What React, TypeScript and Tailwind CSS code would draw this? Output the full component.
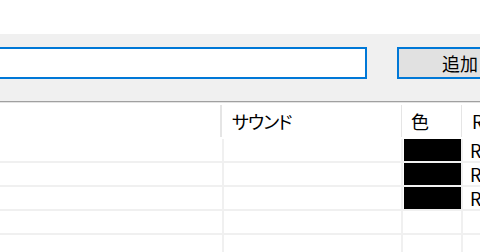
import React from 'react';

const FONT = "font-['Meiryo_UI','Noto_Sans_CJK_JP',sans-serif]";

const rows = [
    { color: '#000000', label: 'RGB(0, 0, 0)' },
    { color: '#000000', label: 'RGB(0, 0, 0)' },
    { color: '#000000', label: 'RGB(0, 0, 0)' },
    { color: '', label: '' },
    { color: '', label: '' },
];

const App: React.FC = () => {
    return (
        <div className={`w-[480px] h-[252px] overflow-hidden bg-white text-black text-[18px] ${FONT} [font-feature-settings:'palt']`}>
            {/* 上の余白 */}
            <div className="h-[34px] bg-white" />

            {/* 入力欄 + 追加ボタン */}
            <div className="h-[67px] bg-[#f0f0f0] flex items-start pt-[13px]">
                <input
                    type="text"
                    className="ml-[-12px] w-[379px] h-[32px] shrink-0 border-2 border-[#0078d7] bg-white outline-none"
                />
                <button className="ml-[30px] w-[120px] h-[32px] shrink-0 border-2 border-[#0078d7] bg-[#e1e1e1] flex items-center pl-[43px] leading-none">
                    追加
                </button>
            </div>
            <div className="h-px bg-[#a0a0a0]" />
            <div className="h-px bg-[#e3e3e3]" />

            {/* ヘッダー */}
            <div className="flex h-[36px] bg-white">
                <div className="w-[222px] shrink-0 flex items-stretch justify-end py-[2px]">
                    <div className="w-[2px] bg-[#e5e5e5]" />
                </div>
                <div className="w-[180px] shrink-0 flex items-center justify-between py-[2px]">
                    <span className="pl-[10px] tracking-[-1px]">サウンド</span>
                    <div className="w-px self-stretch bg-[#e5e5e5]" />
                </div>
                <div className="w-[60px] shrink-0 flex items-center justify-between py-[2px]">
                    <span className="pl-[9px]">色</span>
                    <div className="w-px self-stretch bg-[#e5e5e5]" />
                </div>
                <div className="flex-1 flex items-center pl-[10px] whitespace-nowrap">RGB</div>
            </div>

            {/* 行 */}
            {rows.map((r, i) => (
                <div key={i} className="flex h-[24px] border-b-2 border-[#f0f0f0]">
                    <div className="w-[224px] shrink-0 border-r-2 border-[#f0f0f0]" />
                    <div className="w-[179px] shrink-0 border-r-2 border-[#f0f0f0]" />
                    <div className="w-[60px] shrink-0 border-r-2 border-[#f0f0f0] pl-px">
                        {r.color && <div className="h-full" style={{ backgroundColor: r.color }} />}
                    </div>
                    <div className="flex-1 flex items-center pl-[7px] whitespace-nowrap leading-none">{r.label}</div>
                </div>
            ))}
        </div>
    );
};

export default App;
